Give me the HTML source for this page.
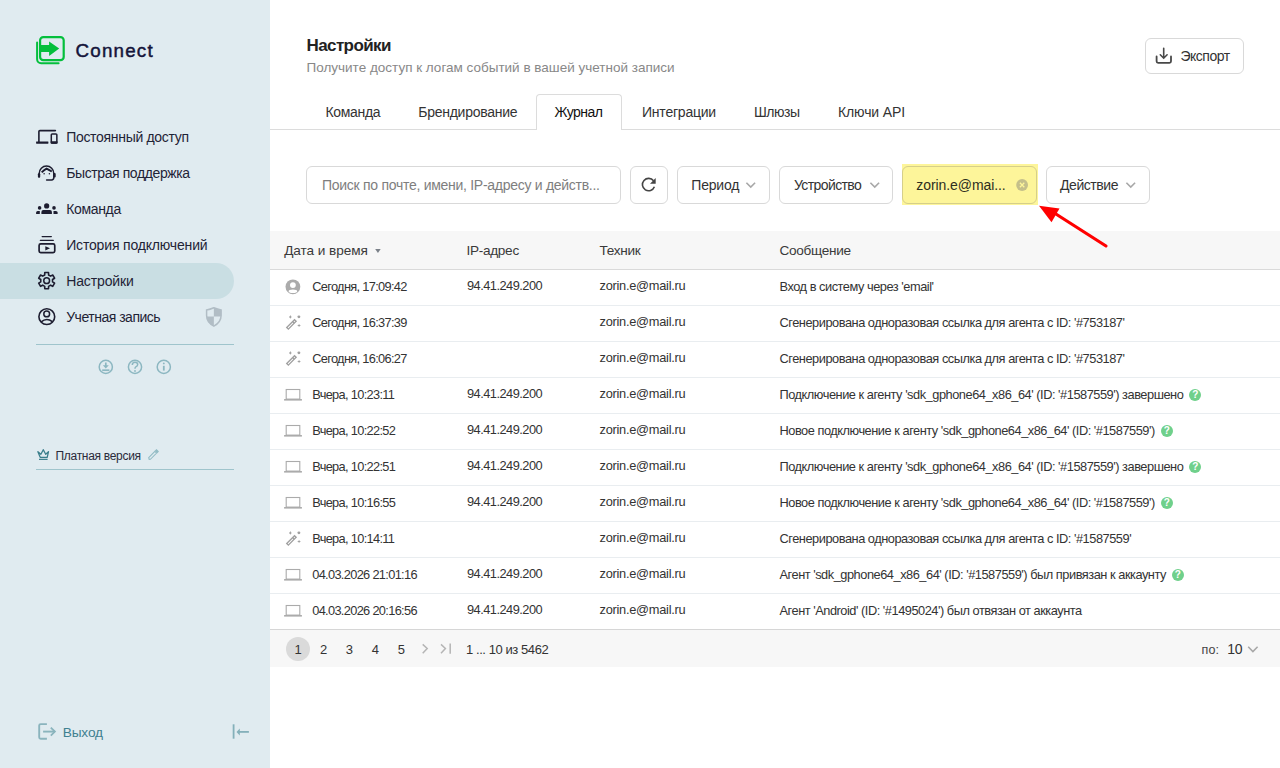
<!DOCTYPE html>
<html><head><meta charset="utf-8">
<style>
*{box-sizing:border-box;margin:0;padding:0}
html,body{width:1280px;height:768px;overflow:hidden;background:#fff;font-family:"Liberation Sans",sans-serif;color:#333}
.abs{position:absolute}
.t{position:absolute;white-space:nowrap;line-height:1}
svg{position:absolute;overflow:visible}
.btn{position:absolute;top:166px;height:38px;border:1px solid #d9d9d9;border-radius:6px;background:#fff}
.row{position:absolute;left:270px;width:1010px;height:36px;border-bottom:1px solid #e9edf0}
.q{display:inline-block;width:12px;height:12px;border-radius:50%;background:#6fd08b;color:#fff;font-style:normal;font-size:10px;font-weight:700;line-height:12px;text-align:center;letter-spacing:0;vertical-align:1px}
</style></head><body>
<div class="abs" style="left:0;top:0;width:270px;height:768px;background:#e0ebf0"></div>
<div class="abs" style="left:0;top:263px;width:234px;height:36px;background:#c9dee3;border-radius:0 18px 18px 0"></div>
<svg style="left:0;top:0" width="80" height="80" viewBox="0 0 80 80">
<path d="M37.1 42.4 V59.3 a4 4 0 0 0 4 4 H58.6" fill="none" stroke="#04bf3c" stroke-width="2" stroke-linecap="round"/>
<rect x="40.1" y="37.1" width="23.6" height="23.1" rx="3.2" fill="none" stroke="#04bf3c" stroke-width="2.2"/>
<path d="M40.9 44.9 H49.1 V41.6 L59.2 48.4 L49.1 55.9 V51.9 H40.9 Z" fill="#04bf3c"/>
</svg>
<div class="t" style="left:75.5px;top:42.00px;font-size:18.8px;color:#14143a;letter-spacing:1.2px;font-weight:400;-webkit-text-stroke:0.45px #14143a">Connect</div>
<div class="t" style="left:66.2px;top:130.00px;font-size:14px;color:#1f2336;letter-spacing:-0.31px;font-weight:400;">Постоянный доступ</div>
<div class="t" style="left:66.2px;top:166.00px;font-size:14px;color:#1f2336;letter-spacing:-0.4px;font-weight:400;">Быстрая поддержка</div>
<div class="t" style="left:66.2px;top:202.00px;font-size:14px;color:#1f2336;letter-spacing:-0.33px;font-weight:400;">Команда</div>
<div class="t" style="left:66.2px;top:238.00px;font-size:14px;color:#1f2336;letter-spacing:-0.17px;font-weight:400;">История подключений</div>
<div class="t" style="left:66.2px;top:274.00px;font-size:14px;color:#1f2336;letter-spacing:-0.12px;font-weight:400;">Настройки</div>
<div class="t" style="left:66.2px;top:310.00px;font-size:14px;color:#1f2336;letter-spacing:-0.49px;font-weight:400;">Учетная запись</div>
<svg style="left:32px;top:125px" width="30" height="30" viewBox="0 0 30 30"><path d="M6.9 17 V6.6 Q6.9 5.6 7.9 5.6 H23.4" fill="none" stroke="#1d1d30" stroke-width="1.6" stroke-linecap="round"/><rect x="4.1" y="16.4" width="12.3" height="2.3" fill="#1d1d30" rx="0.4"/><rect x="19.3" y="8.95" width="5.55" height="9.05" rx="0.9" fill="none" stroke="#1d1d30" stroke-width="1.5"/><rect x="18.6" y="16.3" width="7" height="2.4" rx="0.6" fill="#1d1d30"/></svg>
<svg style="left:32px;top:160px" width="30" height="30" viewBox="0 0 30 30"><path d="M7.2 16.5 V13.4 A7.3 7.3 0 0 1 21.8 13.4 V17.5 Q21.8 19.9 19.6 19.9 H14.6" fill="none" stroke="#1d1d30" stroke-width="1.5" stroke-linecap="round"/><rect x="5.9" y="13.3" width="2.3" height="4.4" rx="1" fill="#1d1d30"/><rect x="21.1" y="12.9" width="2.6" height="4.7" rx="1" fill="#1d1d30"/><path d="M9.7 12.4 Q12 10 14.6 8.6 Q17.4 10 19.8 11.5" fill="none" stroke="#1d1d30" stroke-width="2" stroke-linejoin="round"/><circle cx="12.1" cy="13.7" r="0.75" fill="#1d1d30"/><circle cx="17.4" cy="13.7" r="0.75" fill="#1d1d30"/></svg>
<svg style="left:32px;top:195px" width="30" height="30" viewBox="0 0 30 30"><g fill="#1d1d30"><circle cx="14.65" cy="10.9" r="2.6"/><path d="M9.4 18.9 V17 Q9.4 15 11.4 15 H17.9 Q19.9 15 19.9 17 V18.9 Z"/><circle cx="7.6" cy="12.9" r="1.8"/><circle cx="22" cy="12.9" r="1.8"/><path d="M4.1 18.9 V17.6 Q4.1 16 5.7 16 H7.8 V18.9Z"/><path d="M21.5 18.9 V16 H23.9 Q25.6 16 25.6 17.6 V18.9Z"/></g></svg>
<svg style="left:32px;top:230px" width="30" height="30" viewBox="0 0 30 30"><path d="M10.2 6.6 H19.3 M8.4 10.35 H21.3" fill="none" stroke="#1d1d30" stroke-width="1.4" stroke-linecap="round"/><rect x="7.1" y="13.95" width="15.65" height="8.6" rx="1.6" fill="none" stroke="#1d1d30" stroke-width="1.7"/><path d="M13.3 16.2 V20.5 L18 18.35Z" fill="#1d1d30"/></svg>
<svg style="left:32px;top:266px" width="30" height="30" viewBox="0 0 30 30"><path d="M12.70 8.98 L12.78 6.56 L16.52 6.56 L16.60 8.98 L18.59 10.12 L20.72 8.99 L22.59 12.22 L20.54 13.51 L20.54 15.79 L22.59 17.08 L20.72 20.31 L18.59 19.18 L16.60 20.32 L16.52 22.74 L12.78 22.74 L12.70 20.32 L10.71 19.18 L8.58 20.31 L6.71 17.08 L8.76 15.79 L8.76 13.51 L6.71 12.22 L8.58 8.99 L10.71 10.12Z" fill="none" stroke="#1d1d30" stroke-width="1.6" stroke-linejoin="round"/><circle cx="14.65" cy="14.65" r="2.9" fill="none" stroke="#1d1d30" stroke-width="1.5"/></svg>
<svg style="left:32px;top:302px" width="30" height="30" viewBox="0 0 30 30"><g fill="none" stroke="#1d1d30" stroke-width="1.6"><circle cx="14.8" cy="14.65" r="7.9"/><circle cx="14.7" cy="11.9" r="2.9" stroke-width="1.5"/><path d="M9.2 19.9 Q14.7 15.2 20.3 19.7"/></g></svg>
<svg style="left:200px;top:302px" width="30" height="30" viewBox="0 0 30 30"><path d="M13.85 5.8 Q10 7.5 6.6 7.9 V13.5 Q6.6 20.3 13.85 24.1 Q21.1 20.3 21.1 13.5 V7.9 Q17.7 7.5 13.85 5.8Z" fill="none" stroke="#b1bdc5" stroke-width="1.5"/><path d="M13.85 5.8 Q17.7 7.5 21.1 7.9 V14.6 H13.85Z M13.85 14.6 V24.1 Q6.6 20.3 6.6 14.6Z" fill="#b1bdc5"/></svg>
<div class="abs" style="left:36px;top:344px;width:198px;height:1px;background:#9fc4cc"></div>
<svg style="left:0;top:340px" width="270" height="60" viewBox="0 0 270 60"><g fill="none" stroke="#8cb7c1" stroke-width="1.5">
<circle cx="105.8" cy="26.9" r="6.6"/><circle cx="135" cy="26.9" r="6.6"/><circle cx="163.8" cy="26.9" r="6.6"/>
<path d="M105.8 22.5 V26.5" stroke-width="1.7"/><path d="M102.2 30.2 H109.4" stroke-width="1.7"/>
<path d="M132.3 25.1 Q132.3 22.2 135 22.2 Q137.7 22.2 137.7 24.6 Q137.7 26.1 135.8 26.9 Q135 27.3 135 28.8" stroke-width="1.5"/>
<path d="M163.8 25.8 V30.6" stroke-width="1.8"/></g><path d="M102.8 25.3 H108.8 L105.8 28.6Z" fill="#8cb7c1"/><circle cx="135" cy="31" r="0.9" fill="#8cb7c1"/><circle cx="163.8" cy="23.4" r="0.95" fill="#8cb7c1"/></svg>
<svg style="left:32px;top:440px" width="30" height="30" viewBox="0 0 30 30"><path d="M5.9 11.7 L8.2 17.3 H15.2 L16.5 11.7 L13.7 14.3 L11.3 9.7 L8.9 14.3 Z" fill="none" stroke="#3a7e8b" stroke-width="1.3" stroke-linejoin="round"/><rect x="7" y="18.75" width="8.6" height="1.2" fill="#3a7e8b"/></svg>
<div class="t" style="left:55.5px;top:450.00px;font-size:12px;color:#2a2a3a;letter-spacing:-0.3px;font-weight:400;">Платная версия</div>
<svg style="left:130px;top:440px" width="30" height="30" viewBox="0 0 30 30"><g fill="none" stroke="#93bcc5" stroke-width="1.1"><path d="M19.2 19.4 L18.7 17.6 L24.9 11.4 L26.6 13.1 L20.4 19.3 Z"/><path d="M25.6 10.7 L26.5 9.8 L28.2 11.5 L27.3 12.4 Z" fill="#93bcc5"/></g></svg>
<div class="abs" style="left:36px;top:469px;width:198px;height:1px;background:#9fc4cc"></div>
<svg style="left:30px;top:715px" width="30" height="30" viewBox="0 0 30 30" fill="none" stroke="#8ab4bd" stroke-width="1.9"><path d="M16.9 9.1 H10.7 Q9.2 9.1 9.2 10.6 V22.3 Q9.2 23.8 10.7 23.8 H16.9"/><path d="M13.1 16.6 H25" /><path d="M20.8 12.6 L24.9 16.6 L20.8 20.6" stroke-width="1.8"/></svg>
<div class="t" style="left:62.7px;top:726.00px;font-size:13.7px;color:#3f8190;letter-spacing:-0.15px;font-weight:400;">Выход</div>
<svg style="left:220px;top:715px" width="40" height="30" viewBox="0 0 40 30"><path d="M13.6 9.3 V23.7" stroke="#84b0ba" stroke-width="1.8"/><path d="M18 16.9 H28.9" stroke="#84b0ba" stroke-width="1.8"/><path d="M16.5 16.9 L19.8 13.4 V20.4Z" fill="#84b0ba"/></svg>
<div class="t" style="left:306.5px;top:37.00px;font-size:17px;color:#222;letter-spacing:-0.6px;font-weight:700;">Настройки</div>
<div class="t" style="left:306.5px;top:61.00px;font-size:13.5px;color:#888;letter-spacing:0px;font-weight:400;">Получите доступ к логам событий в вашей учетной записи</div>
<div class="abs" style="left:1145px;top:38px;width:99px;height:36px;border:1px solid #d9d9d9;border-radius:6px"></div>
<svg style="left:1150px;top:42px" width="30" height="30" viewBox="0 0 30 30" fill="none" stroke="#484848"><path d="M6.6 14.5 V19.3 Q6.6 20.8 8.1 20.8 H19.5 Q21 20.8 21 19.3 V14.5" stroke-width="1.8" stroke-linecap="round"/><path d="M13.7 6.2 V15.8 M10.3 12.8 L13.7 16.2 L17.1 12.8" stroke-width="1.6" stroke-linecap="round"/></svg>
<div class="t" style="left:1180.5px;top:49.00px;font-size:14px;color:#333;letter-spacing:-0.5px;font-weight:400;">Экспорт</div>
<div class="abs" style="left:270px;top:129px;width:1010px;height:1px;background:#dcdcdc"></div>
<div class="abs" style="left:536px;top:94px;width:86px;height:36px;border:1px solid #dcdcdc;border-bottom:none;border-radius:4px 4px 0 0;background:#fff"></div>
<div class="t" style="left:325.5px;top:105.00px;font-size:14px;color:#333;letter-spacing:-0.33px;font-weight:400;">Команда</div>
<div class="t" style="left:418.2px;top:105.00px;font-size:14px;color:#333;letter-spacing:-0.25px;font-weight:400;">Брендирование</div>
<div class="t" style="left:554.4px;top:105.00px;font-size:14px;color:#111;letter-spacing:-0.5px;font-weight:400;">Журнал</div>
<div class="t" style="left:642px;top:105.00px;font-size:14px;color:#333;letter-spacing:-0.22px;font-weight:400;">Интеграции</div>
<div class="t" style="left:754px;top:105.00px;font-size:14px;color:#333;letter-spacing:-0.5px;font-weight:400;">Шлюзы</div>
<div class="t" style="left:838px;top:105.00px;font-size:14px;color:#333;letter-spacing:-0.12px;font-weight:400;">Ключи API</div>
<div class="btn" style="left:306px;width:315px;"></div>
<div class="t" style="left:322px;top:178.00px;font-size:14px;color:#7e7e7e;letter-spacing:-0.28px;font-weight:400;">Поиск по почте, имени, IP-адресу и действ...</div>
<div class="btn" style="left:630px;width:38px;"></div>
<svg style="left:634px;top:170px" width="30" height="30" viewBox="0 0 30 30"><path d="M20.4 16.8 A6.2 6.2 0 1 1 19.54 10.83" fill="none" stroke="#444" stroke-width="1.6"/><path d="M21.7 8 V13.7 H16Z" fill="#444"/></svg>
<div class="btn" style="left:677px;width:93px;"></div>
<div class="t" style="left:691.3px;top:178.00px;font-size:14px;color:#333;letter-spacing:-0.2px;font-weight:400;">Период</div>
<svg style="left:740.0px;top:175px" width="22" height="20" viewBox="0 0 22 20"><path d="M6.4 7.7 L10.75 12.1 L15.1 7.7" fill="none" stroke="#a8a8a8" stroke-width="1.6"/></svg>
<div class="btn" style="left:779px;width:114px;"></div>
<div class="t" style="left:794px;top:178.00px;font-size:14px;color:#333;letter-spacing:-0.6px;font-weight:400;">Устройство</div>
<svg style="left:863.8000000000001px;top:175px" width="22" height="20" viewBox="0 0 22 20"><path d="M6.4 7.7 L10.75 12.1 L15.1 7.7" fill="none" stroke="#a8a8a8" stroke-width="1.6"/></svg>
<div class="abs" style="left:902px;top:164px;width:136px;height:41px;background:#fdf59a"></div>
<div class="abs" style="left:902px;top:166px;width:135px;height:38px;border:1px solid #d6cf8a;border-radius:6px"></div>
<div class="t" style="left:916.3px;top:178.00px;font-size:14px;color:#2e2e20;letter-spacing:-0.08px;font-weight:400;">zorin.e@mai...</div>
<svg style="left:1010px;top:175px" width="20" height="20" viewBox="0 0 20 20"><circle cx="12.1" cy="10" r="5.9" fill="#c4bf8a"/><path d="M9.9 7.8 L14.3 12.2 M14.3 7.8 L9.9 12.2" stroke="#fdf59a" stroke-width="1.3"/></svg>
<div class="btn" style="left:1046px;width:104px;"></div>
<div class="t" style="left:1060px;top:178.00px;font-size:14px;color:#333;letter-spacing:-0.43px;font-weight:400;">Действие</div>
<svg style="left:1120.4px;top:175px" width="22" height="20" viewBox="0 0 22 20"><path d="M6.4 7.7 L10.75 12.1 L15.1 7.7" fill="none" stroke="#a8a8a8" stroke-width="1.6"/></svg>
<div class="abs" style="left:270px;top:231px;width:1010px;height:39px;background:#f7f7f7;border-bottom:1px solid #dadada"></div>
<div class="t" style="left:284.2px;top:244.00px;font-size:13.6px;color:#3a3a3a;letter-spacing:-0.05px;font-weight:400;">Дата и время</div>
<svg style="left:370px;top:245px" width="14" height="12" viewBox="0 0 14 12"><path d="M5.2 4 H10.7 L7.95 8.1Z" fill="#7b8189"/></svg>
<div class="t" style="left:466.5px;top:244.00px;font-size:13.6px;color:#3a3a3a;letter-spacing:-0.3px;font-weight:400;">IP-адрес</div>
<div class="t" style="left:599.5px;top:244.00px;font-size:13.6px;color:#3a3a3a;letter-spacing:-0.3px;font-weight:400;">Техник</div>
<div class="t" style="left:779.5px;top:244.00px;font-size:13.6px;color:#3a3a3a;letter-spacing:-0.3px;font-weight:400;">Сообщение</div>
<div class="row" style="top:270px"></div>
<svg style="left:280px;top:272px" width="30" height="30" viewBox="0 0 30 30"><circle cx="12.9" cy="14.8" r="7.4" fill="#ababab"/><circle cx="12.9" cy="13.1" r="2.9" fill="#fff"/><ellipse cx="12.9" cy="19.2" rx="4.3" ry="1.8" fill="#fff"/></svg>
<div class="t" style="left:312.2px;top:281.00px;font-size:12.8px;color:#333;letter-spacing:-0.67px;font-weight:400;">Сегодня, 17:09:42</div>
<div class="t" style="left:467px;top:280.00px;font-size:12.8px;color:#333;letter-spacing:-0.52px;font-weight:400;">94.41.249.200</div>
<div class="t" style="left:599.5px;top:280.00px;font-size:12.8px;color:#333;letter-spacing:-0.26px;font-weight:400;">zorin.e@mail.ru</div>
<div class="t" style="left:779.5px;top:281.00px;font-size:12.8px;color:#333;letter-spacing:-0.47px;font-weight:400;">Вход в систему через &#39;email&#39;</div>
<div class="row" style="top:306px"></div>
<svg style="left:280px;top:310px" width="30" height="30" viewBox="0 0 30 30"><g transform="translate(11.43,14.44) rotate(-45)" fill="none" stroke="#a0a0a0" stroke-width="1.35"><rect x="-5.5" y="-1.15" width="11" height="2.3"/><line x1="2.9" y1="-1.15" x2="2.9" y2="1.15"/></g><g fill="#a0a0a0"><path d="M10.35 5.0 Q10.68 6.48 11.85 6.9 Q10.68 7.32 10.35 8.8 Q10.02 7.32 8.85 6.9 Q10.02 6.48 10.35 5.0Z"/><circle cx="18.9" cy="6.85" r="1.45"/><path d="M19.05 13.9 Q19.47 15.15 20.95 15.5 Q19.47 15.85 19.05 17.1 Q18.63 15.85 17.150000000000002 15.5 Q18.63 15.15 19.05 13.9Z"/></g></svg>
<div class="t" style="left:312.2px;top:317.00px;font-size:12.8px;color:#333;letter-spacing:-0.67px;font-weight:400;">Сегодня, 16:37:39</div>
<div class="t" style="left:599.5px;top:316.00px;font-size:12.8px;color:#333;letter-spacing:-0.26px;font-weight:400;">zorin.e@mail.ru</div>
<div class="t" style="left:779.5px;top:317.00px;font-size:12.8px;color:#333;letter-spacing:-0.47px;font-weight:400;">Сгенерирована одноразовая ссылка для агента с ID: &#39;#753187&#39;</div>
<div class="row" style="top:342px"></div>
<svg style="left:280px;top:346px" width="30" height="30" viewBox="0 0 30 30"><g transform="translate(11.43,14.44) rotate(-45)" fill="none" stroke="#a0a0a0" stroke-width="1.35"><rect x="-5.5" y="-1.15" width="11" height="2.3"/><line x1="2.9" y1="-1.15" x2="2.9" y2="1.15"/></g><g fill="#a0a0a0"><path d="M10.35 5.0 Q10.68 6.48 11.85 6.9 Q10.68 7.32 10.35 8.8 Q10.02 7.32 8.85 6.9 Q10.02 6.48 10.35 5.0Z"/><circle cx="18.9" cy="6.85" r="1.45"/><path d="M19.05 13.9 Q19.47 15.15 20.95 15.5 Q19.47 15.85 19.05 17.1 Q18.63 15.85 17.150000000000002 15.5 Q18.63 15.15 19.05 13.9Z"/></g></svg>
<div class="t" style="left:312.2px;top:353.00px;font-size:12.8px;color:#333;letter-spacing:-0.67px;font-weight:400;">Сегодня, 16:06:27</div>
<div class="t" style="left:599.5px;top:352.00px;font-size:12.8px;color:#333;letter-spacing:-0.26px;font-weight:400;">zorin.e@mail.ru</div>
<div class="t" style="left:779.5px;top:353.00px;font-size:12.8px;color:#333;letter-spacing:-0.47px;font-weight:400;">Сгенерирована одноразовая ссылка для агента с ID: &#39;#753187&#39;</div>
<div class="row" style="top:378px"></div>
<svg style="left:280px;top:380px" width="30" height="30" viewBox="0 0 30 30"><rect x="6.2" y="9.5" width="13.6" height="9.6" fill="none" stroke="#ababab" stroke-width="1.1"/><rect x="4.1" y="19" width="17.8" height="1.6" fill="#ababab"/></svg>
<div class="t" style="left:312.2px;top:389.00px;font-size:12.8px;color:#333;letter-spacing:-0.67px;font-weight:400;">Вчера, 10:23:11</div>
<div class="t" style="left:467px;top:388.00px;font-size:12.8px;color:#333;letter-spacing:-0.52px;font-weight:400;">94.41.249.200</div>
<div class="t" style="left:599.5px;top:388.00px;font-size:12.8px;color:#333;letter-spacing:-0.26px;font-weight:400;">zorin.e@mail.ru</div>
<div class="t" style="left:779.5px;top:389.00px;font-size:12.8px;color:#333;letter-spacing:-0.47px;font-weight:400;">Подключение к агенту &#39;sdk_gphone64_x86_64&#39; (ID: &#39;#1587559&#39;) завершено<i class="q" style="margin-left:6px">?</i></div>
<div class="row" style="top:414px"></div>
<svg style="left:280px;top:416px" width="30" height="30" viewBox="0 0 30 30"><rect x="6.2" y="9.5" width="13.6" height="9.6" fill="none" stroke="#ababab" stroke-width="1.1"/><rect x="4.1" y="19" width="17.8" height="1.6" fill="#ababab"/></svg>
<div class="t" style="left:312.2px;top:425.00px;font-size:12.8px;color:#333;letter-spacing:-0.67px;font-weight:400;">Вчера, 10:22:52</div>
<div class="t" style="left:467px;top:424.00px;font-size:12.8px;color:#333;letter-spacing:-0.52px;font-weight:400;">94.41.249.200</div>
<div class="t" style="left:599.5px;top:424.00px;font-size:12.8px;color:#333;letter-spacing:-0.26px;font-weight:400;">zorin.e@mail.ru</div>
<div class="t" style="left:779.5px;top:425.00px;font-size:12.8px;color:#333;letter-spacing:-0.47px;font-weight:400;">Новое подключение к агенту &#39;sdk_gphone64_x86_64&#39; (ID: &#39;#1587559&#39;)<i class="q" style="margin-left:6px">?</i></div>
<div class="row" style="top:450px"></div>
<svg style="left:280px;top:452px" width="30" height="30" viewBox="0 0 30 30"><rect x="6.2" y="9.5" width="13.6" height="9.6" fill="none" stroke="#ababab" stroke-width="1.1"/><rect x="4.1" y="19" width="17.8" height="1.6" fill="#ababab"/></svg>
<div class="t" style="left:312.2px;top:461.00px;font-size:12.8px;color:#333;letter-spacing:-0.67px;font-weight:400;">Вчера, 10:22:51</div>
<div class="t" style="left:467px;top:460.00px;font-size:12.8px;color:#333;letter-spacing:-0.52px;font-weight:400;">94.41.249.200</div>
<div class="t" style="left:599.5px;top:460.00px;font-size:12.8px;color:#333;letter-spacing:-0.26px;font-weight:400;">zorin.e@mail.ru</div>
<div class="t" style="left:779.5px;top:461.00px;font-size:12.8px;color:#333;letter-spacing:-0.47px;font-weight:400;">Подключение к агенту &#39;sdk_gphone64_x86_64&#39; (ID: &#39;#1587559&#39;) завершено<i class="q" style="margin-left:6px">?</i></div>
<div class="row" style="top:486px"></div>
<svg style="left:280px;top:488px" width="30" height="30" viewBox="0 0 30 30"><rect x="6.2" y="9.5" width="13.6" height="9.6" fill="none" stroke="#ababab" stroke-width="1.1"/><rect x="4.1" y="19" width="17.8" height="1.6" fill="#ababab"/></svg>
<div class="t" style="left:312.2px;top:497.00px;font-size:12.8px;color:#333;letter-spacing:-0.67px;font-weight:400;">Вчера, 10:16:55</div>
<div class="t" style="left:467px;top:496.00px;font-size:12.8px;color:#333;letter-spacing:-0.52px;font-weight:400;">94.41.249.200</div>
<div class="t" style="left:599.5px;top:496.00px;font-size:12.8px;color:#333;letter-spacing:-0.26px;font-weight:400;">zorin.e@mail.ru</div>
<div class="t" style="left:779.5px;top:497.00px;font-size:12.8px;color:#333;letter-spacing:-0.47px;font-weight:400;">Новое подключение к агенту &#39;sdk_gphone64_x86_64&#39; (ID: &#39;#1587559&#39;)<i class="q" style="margin-left:6px">?</i></div>
<div class="row" style="top:522px"></div>
<svg style="left:280px;top:526px" width="30" height="30" viewBox="0 0 30 30"><g transform="translate(11.43,14.44) rotate(-45)" fill="none" stroke="#a0a0a0" stroke-width="1.35"><rect x="-5.5" y="-1.15" width="11" height="2.3"/><line x1="2.9" y1="-1.15" x2="2.9" y2="1.15"/></g><g fill="#a0a0a0"><path d="M10.35 5.0 Q10.68 6.48 11.85 6.9 Q10.68 7.32 10.35 8.8 Q10.02 7.32 8.85 6.9 Q10.02 6.48 10.35 5.0Z"/><circle cx="18.9" cy="6.85" r="1.45"/><path d="M19.05 13.9 Q19.47 15.15 20.95 15.5 Q19.47 15.85 19.05 17.1 Q18.63 15.85 17.150000000000002 15.5 Q18.63 15.15 19.05 13.9Z"/></g></svg>
<div class="t" style="left:312.2px;top:533.00px;font-size:12.8px;color:#333;letter-spacing:-0.67px;font-weight:400;">Вчера, 10:14:11</div>
<div class="t" style="left:599.5px;top:532.00px;font-size:12.8px;color:#333;letter-spacing:-0.26px;font-weight:400;">zorin.e@mail.ru</div>
<div class="t" style="left:779.5px;top:533.00px;font-size:12.8px;color:#333;letter-spacing:-0.47px;font-weight:400;">Сгенерирована одноразовая ссылка для агента с ID: &#39;#1587559&#39;</div>
<div class="row" style="top:558px"></div>
<svg style="left:280px;top:560px" width="30" height="30" viewBox="0 0 30 30"><rect x="6.2" y="9.5" width="13.6" height="9.6" fill="none" stroke="#ababab" stroke-width="1.1"/><rect x="4.1" y="19" width="17.8" height="1.6" fill="#ababab"/></svg>
<div class="t" style="left:312.2px;top:569.00px;font-size:12.8px;color:#333;letter-spacing:-0.67px;font-weight:400;">04.03.2026 21:01:16</div>
<div class="t" style="left:467px;top:568.00px;font-size:12.8px;color:#333;letter-spacing:-0.52px;font-weight:400;">94.41.249.200</div>
<div class="t" style="left:599.5px;top:568.00px;font-size:12.8px;color:#333;letter-spacing:-0.26px;font-weight:400;">zorin.e@mail.ru</div>
<div class="t" style="left:779.5px;top:569.00px;font-size:12.8px;color:#333;letter-spacing:-0.47px;font-weight:400;">Агент &#39;sdk_gphone64_x86_64&#39; (ID: &#39;#1587559&#39;) был привязан к аккаунту<i class="q" style="margin-left:6px">?</i></div>
<div class="row" style="top:594px"></div>
<svg style="left:280px;top:596px" width="30" height="30" viewBox="0 0 30 30"><rect x="6.2" y="9.5" width="13.6" height="9.6" fill="none" stroke="#ababab" stroke-width="1.1"/><rect x="4.1" y="19" width="17.8" height="1.6" fill="#ababab"/></svg>
<div class="t" style="left:312.2px;top:605.00px;font-size:12.8px;color:#333;letter-spacing:-0.67px;font-weight:400;">04.03.2026 20:16:56</div>
<div class="t" style="left:467px;top:604.00px;font-size:12.8px;color:#333;letter-spacing:-0.52px;font-weight:400;">94.41.249.200</div>
<div class="t" style="left:599.5px;top:604.00px;font-size:12.8px;color:#333;letter-spacing:-0.26px;font-weight:400;">zorin.e@mail.ru</div>
<div class="t" style="left:779.5px;top:605.00px;font-size:12.8px;color:#333;letter-spacing:-0.47px;font-weight:400;">Агент &#39;Android&#39; (ID: &#39;#1495024&#39;) был отвязан от аккаунта</div>
<div class="abs" style="left:270px;top:629px;width:1010px;height:38px;background:#f7f7f7;border-top:1px solid #d6d6d6"></div>
<div class="abs" style="left:286px;top:637px;width:24px;height:24px;border-radius:50%;background:#dadada"></div>
<div class="t" style="left:288px;width:20px;text-align:center;top:643px;font-size:13px;color:#333">1</div>
<div class="t" style="left:313.7px;width:20px;text-align:center;top:643px;font-size:13px;color:#333">2</div>
<div class="t" style="left:339.3px;width:20px;text-align:center;top:643px;font-size:13px;color:#333">3</div>
<div class="t" style="left:365.3px;width:20px;text-align:center;top:643px;font-size:13px;color:#333">4</div>
<div class="t" style="left:391.4px;width:20px;text-align:center;top:643px;font-size:13px;color:#333">5</div>
<svg style="left:410px;top:636px" width="50" height="26" viewBox="0 0 50 26" fill="none" stroke="#b5b5b5" stroke-width="1.5"><path d="M12.7 8.4 L17.2 12.5 L12.7 17.2"/><path d="M31 8.4 L35.4 12.5 L31 17.2"/><path d="M40.2 7.6 V17.8"/></svg>
<div class="t" style="left:466px;top:643.00px;font-size:13px;color:#333;letter-spacing:-0.43px;font-weight:400;">1 ... 10 из 5462</div>
<div class="t" style="left:1201.6px;top:644.00px;font-size:12.5px;color:#444;letter-spacing:0.1px;font-weight:400;">по:</div>
<div class="t" style="left:1227.3px;top:642.00px;font-size:14px;color:#333;letter-spacing:-0.3px;font-weight:400;">10</div>
<svg style="left:1240px;top:640px" width="22" height="20" viewBox="0 0 22 20"><path d="M8.2 6.8 L12.9 11.5 L17.6 6.8" fill="none" stroke="#a8a8a8" stroke-width="1.6"/></svg>
<svg style="left:0;top:0" width="1280" height="768" viewBox="0 0 1280 768"><path d="M1106 246 L1052 211.5" stroke="#ff0000" stroke-width="3.2" stroke-linecap="round"/><path d="M1039 205.8 L1059.5 208.5 L1051.5 222.2 Z" fill="#ff0000"/></svg>
</body></html>
